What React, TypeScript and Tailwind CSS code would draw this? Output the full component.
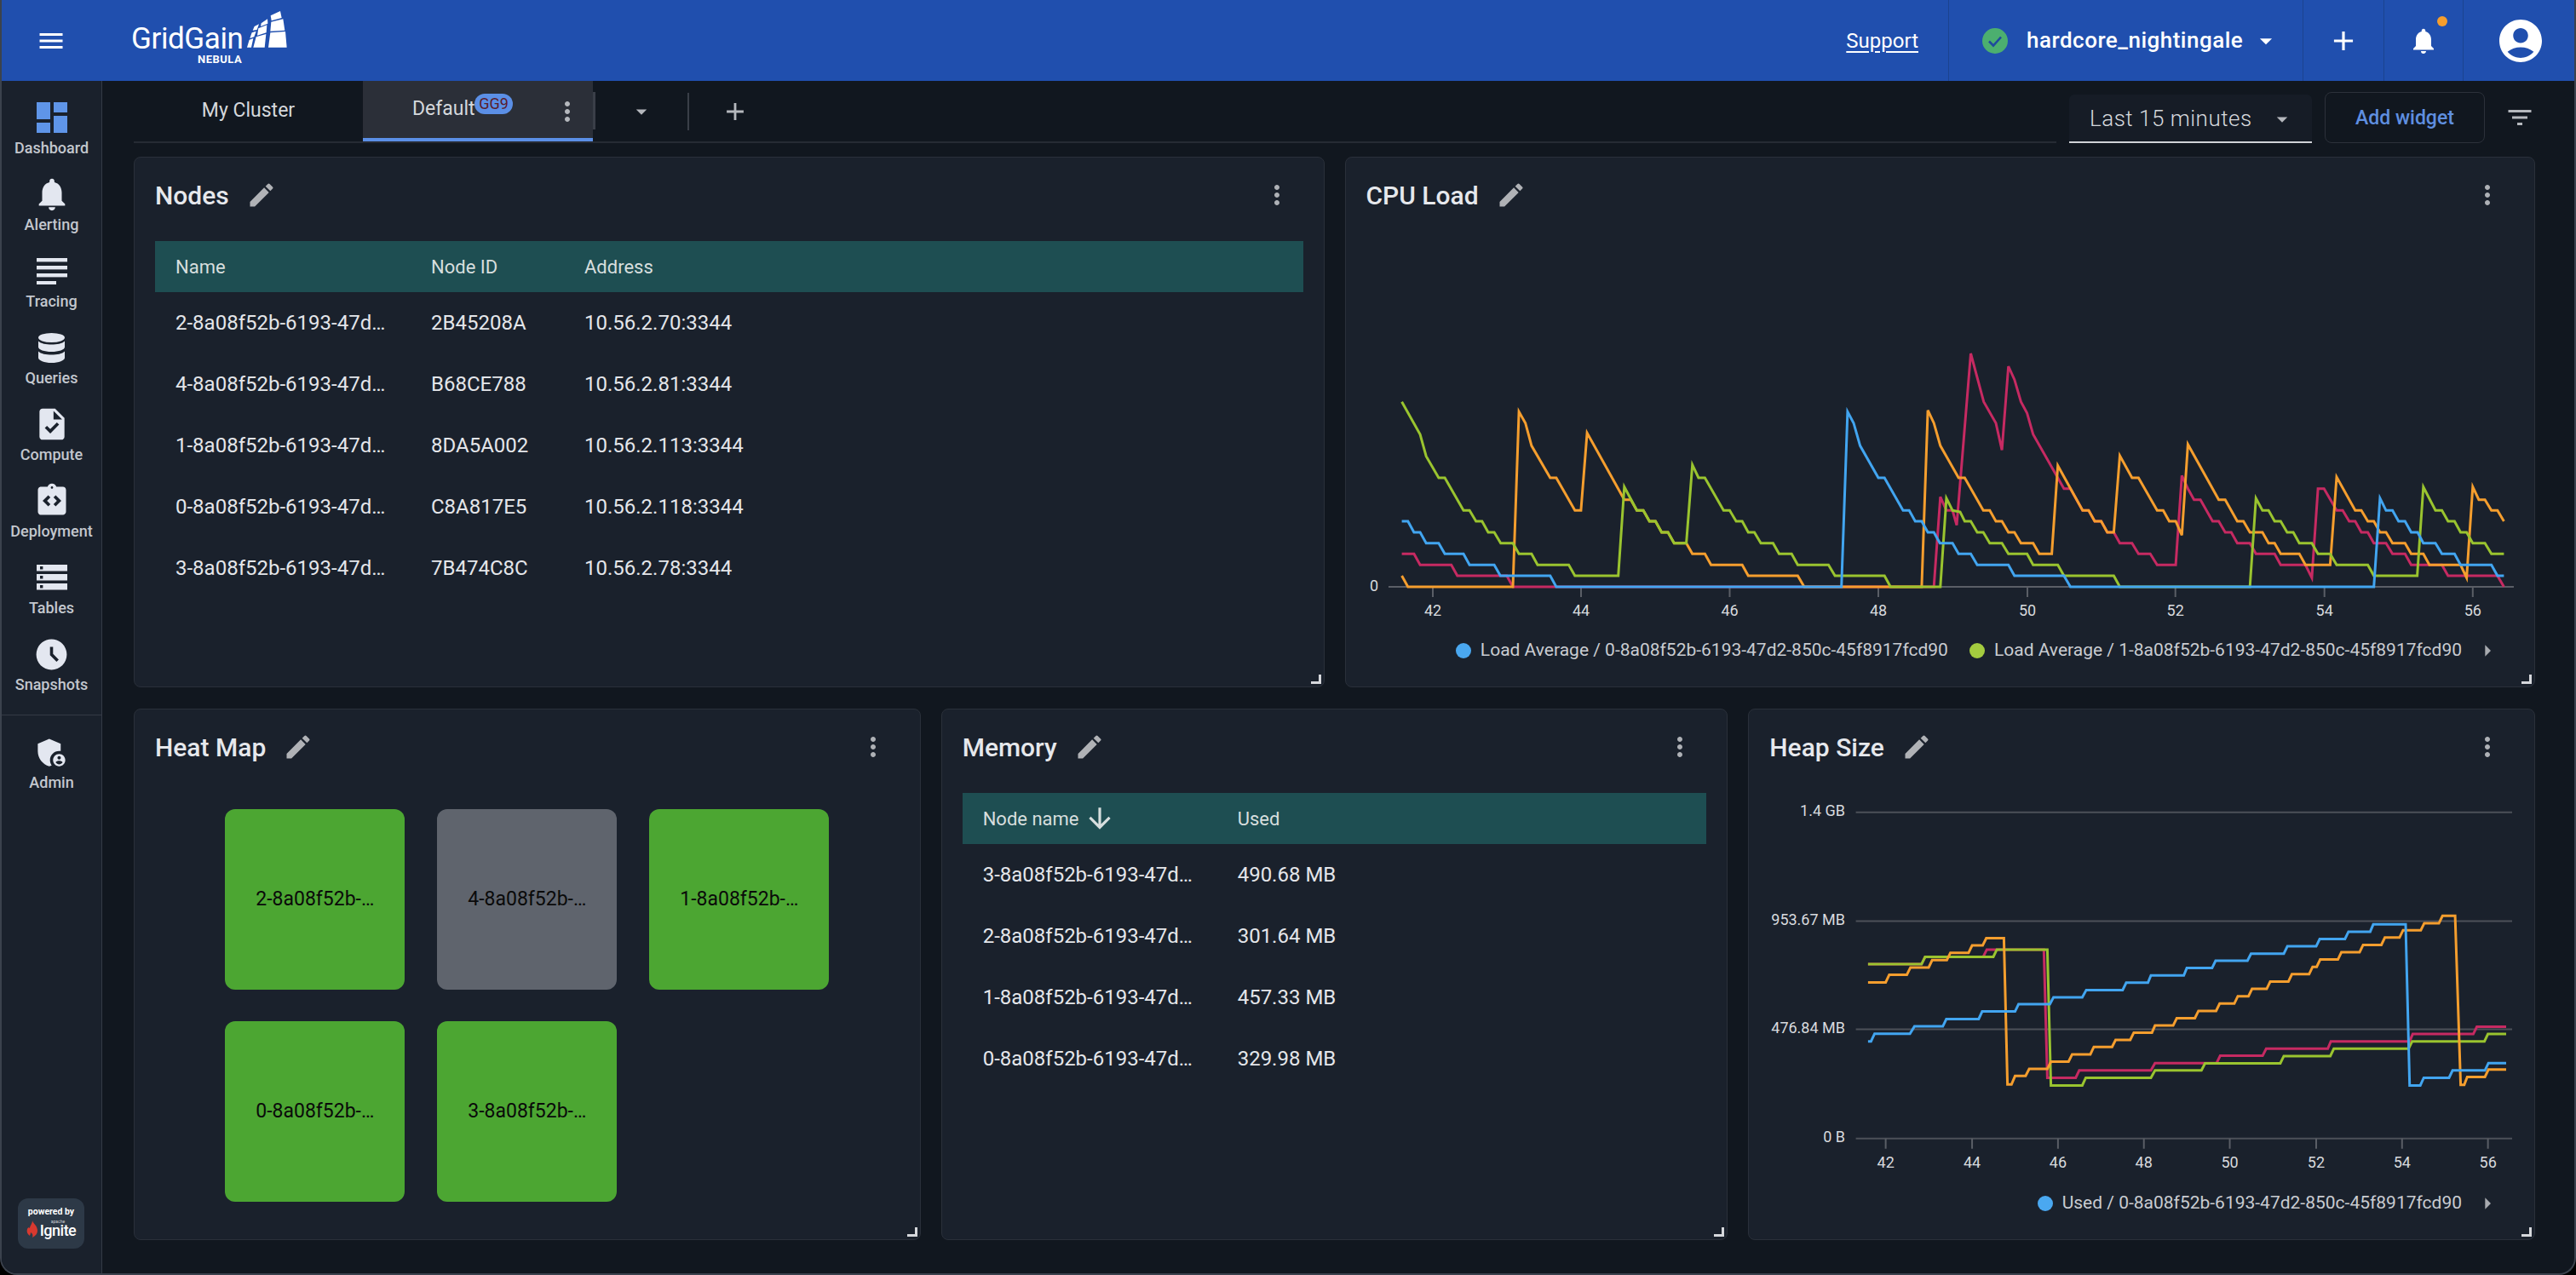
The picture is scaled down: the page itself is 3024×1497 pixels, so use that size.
import React from "react";
import {
  MdDashboard, MdNotifications, MdTask, MdIntegrationInstructions, MdAccessTimeFilled, MdAdminPanelSettings,
  MdEdit, MdMoreVert, MdMenu, MdAccountCircle, MdFilterList, MdAdd, MdArrowDropDown, MdArrowRight, MdArrowDownward,
} from "react-icons/md";

type P = number[];
const BLUE = "#42a5f0", PINK = "#c62a62", ORANGE = "#f59e2e", GREEN = "#9ac42f";

// CPU chart: traced from the picture; a is in left half units, b in right half units
const cx = (z: number) => 1600 + z / 2.24;
const cy = (z: number) => 380 + z / 3;
function cpu(a: P, b: P) {
  const out: string[] = [];
  for (let i = 0; i < a.length; i += 2) out.push(`${cx(a[i]).toFixed(1)},${cy(a[i + 1]).toFixed(1)}`);
  for (let i = 0; i < b.length; i += 2) out.push(`${cx(b[i] + 1568).toFixed(1)},${cy(b[i + 1]).toFixed(1)}`);
  return out.join(" ");
}
const hx = (z: number) => 2080 + z / 1.686;
const hy = (z: number) => 930 + z / 2.904;
function heap(a: P) {
  const out: string[] = [];
  for (let i = 0; i < a.length; i += 2) out.push(`${hx(a[i]).toFixed(1)},${hy(a[i + 1]).toFixed(1)}`);
  return out.join(" ");
}

const cpuPink = cpu(
  [100,811,132,811,148,850,230,850,246,888,376,888,392,927,1499,927,1516,610,1532,658,1548,658,1559,710],
  [28,105,62,275,94,350,110,445,127,150,143,197,160,275,176,315,192,390,273,581,290,581,322,658,338,658,354,696,371,696,387,735,404,735,420,773,452,773,469,811,500,811,518,850,567,850,583,535,599,581,615,620,632,620,664,696,680,696,697,735,713,735,729,773,762,773,778,811,827,811,843,850,908,850,925,895,941,581,957,581,990,658,1006,658,1023,696,1039,696,1055,735,1072,735,1088,773,1120,773,1137,811,1170,811,1186,850,1267,850,1283,888,1413,888,1430,927],
);
const cpuOrange = cpu(
  [100,888,116,927,392,927,408,310,425,350,441,430,490,543,506,543,555,658,571,658,587,385,685,620,702,620,718,658,735,658,751,696,767,696,783,735,800,735,816,773,848,773,864,811,897,811,913,850,995,850,1011,888,1141,888,1158,927,1467,927,1483,305,1499,350,1516,430,1564,543],
  [12,543,61,658,78,658,94,696,110,696,127,735,143,735,160,773,192,773,208,811,241,811,257,500,322,658,338,658,354,696,371,696,387,735,404,735,420,465,452,543,469,543,518,658,534,658,550,696,567,696,583,745,599,425,680,620,697,620,729,696,745,696,762,735,795,735,811,773,827,773,843,811,892,811,908,850,973,850,990,540,1039,658,1055,658,1072,696,1088,696,1104,735,1120,735,1137,773,1170,773,1186,811,1218,811,1234,850,1316,850,1332,895,1348,575,1364,620,1380,620,1397,658,1413,658,1430,696],
);
const cpuGreen = cpu(
  [100,275,148,390,164,467,197,543,213,543,262,658,278,658,295,696,311,696,327,735,343,735,360,773,392,773,408,811,441,811,457,850,539,850,555,888,669,888,685,575,718,658,735,658,751,696,767,696,783,735,800,735,816,773,848,773,864,497,880,543,897,543,946,658,962,658,979,696,995,696,1011,735,1027,735,1044,773,1076,773,1092,811,1125,811,1141,850,1222,850,1239,888,1369,888,1385,927,1516,927,1532,615,1548,658],
  [0,663,12,696,28,696,45,735,61,735,78,773,110,773,127,811,176,811,192,850,257,850,273,888,404,888,420,927,762,927,778,615,795,658,811,658,827,696,843,696,860,735,876,735,892,773,925,773,941,811,973,811,990,850,1072,850,1088,888,1202,888,1218,575,1250,658,1267,658,1283,696,1300,696,1316,735,1332,735,1348,773,1380,773,1397,811,1430,811],
);
const cpuBlue = cpu(
  [100,696,116,696,132,735,148,735,164,773,197,773,213,811,262,811,278,850,343,850,359,888,490,888,506,927,1256,927,1272,310,1288,350,1305,430,1353,543,1369,543,1418,658,1434,658,1450,696,1467,696,1483,735,1499,735,1515,773,1548,773,1564,811],
  [28,811,45,850,127,850,143,888,273,888,290,927,1088,927,1104,615,1120,658,1137,658,1153,696,1170,696,1186,735,1203,735,1218,773,1250,773,1267,811,1300,811,1316,850,1397,850,1413,888,1430,888],
);

const heapPink = heap([192,587,298,587,305,562,420,562,427,537,540,537,547,974,603,974,610,949,752,949,760,924,882,924,889,899,973,899,980,875,1102,875,1108,850,1264,850,1270,825,1390,825,1397,800,1455,800]);
const heapGreen = heap([192,587,298,587,305,562,440,562,447,537,547,537,554,1000,616,1000,623,974,752,974,760,949,852,949,859,925,1008,925,1015,900,1107,900,1114,875,1262,875,1269,850,1412,850,1419,825,1455,825]);
const heapOrange = heap([192,649,227,649,234,623,269,623,276,598,312,598,319,573,348,573,355,548,391,548,398,523,419,523,426,498,461,498,468,997,476,997,483,968,504,968,511,944,547,944,554,919,589,919,596,894,632,894,639,869,675,869,682,845,711,845,718,820,754,820,760,796,796,796,803,771,839,771,846,746,881,746,888,721,917,721,924,696,945,696,952,671,981,671,988,646,1024,646,1031,621,1065,621,1072,596,1080,596,1087,571,1122,571,1129,546,1165,546,1172,521,1208,521,1215,496,1244,496,1251,471,1286,471,1293,447,1322,447,1329,422,1354,422,1365,998,1372,998,1378,971,1413,971,1420,946,1455,946]);
const heapBlue = heap([192,850,198,850,205,824,275,824,284,799,340,799,347,774,411,774,418,748,483,748,490,723,552,723,559,700,616,700,624,675,696,675,703,650,746,650,752,625,817,625,823,600,873,600,880,575,943,575,950,551,1015,551,1022,526,1079,526,1086,501,1136,501,1143,476,1186,476,1192,451,1256,451,1264,1000,1285,1000,1292,974,1342,974,1349,949,1413,949,1420,924,1455,924]);

function Line({ points, color }: { points: string; color: string }) {
  return <polyline points={points} fill="none" stroke={color} strokeWidth={3} strokeLinejoin="miter" />;
}

function TracingIcon() {
  return (
    <svg viewBox="0 0 36 32" className="w-[36px] h-[32px]" fill="currentColor">
      <rect x="0" y="1" width="36" height="4.4" />
      <rect x="0" y="10" width="36" height="4.4" />
      <rect x="0" y="19" width="36" height="4.4" />
      <rect x="0" y="28" width="23" height="4.4" />
    </svg>
  );
}
function QueriesIcon() {
  return (
    <svg viewBox="0 0 31 35" className="w-[31px] h-[35px]" fill="currentColor">
      <ellipse cx="15.5" cy="5.5" rx="15.5" ry="5.5" />
      <path d="M0 9.5c3 3 9 4 15.5 4s12.500-1 15.500-4v7c0 3-7 5.500-15.500 5.500S0 19.500 0 16.500z" />
      <path d="M0 21.500c3 3 9 4 15.500 4s12.500-1 15.500-4V29c0 3.300-7 6-15.500 6S0 32.300 0 29z" />
    </svg>
  );
}
function TablesIcon() {
  return (
    <svg viewBox="0 0 36 30" className="w-[36px] h-[30px]" fill="currentColor">
      <path fillRule="evenodd" d="M0 0h36v7.600H0zM4 2v3.400h3.400V2z" />
      <path fillRule="evenodd" d="M0 11h36v7.600H0zM4 13v3.400h3.400V13z" />
      <path fillRule="evenodd" d="M0 22h36v7.600H0zM4 24v3.400h3.400V24z" />
    </svg>
  );
}

function NavItem({ label, children }: { label: string; children: React.ReactNode }) {
  return (
    <div className="h-[90px] w-full flex flex-col items-center">
      <div className="h-[48px] flex items-center justify-center text-[#e3e7f0]">{children}</div>
      <div className="h-[24px] leading-[24px] text-[18px] font-medium text-[#c3c7ce]">{label}</div>
    </div>
  );
}

function Sidebar() {
  return (
    <aside className="w-[118px] shrink-0 h-full bg-[#1a212c] border-r border-[#343a45] flex flex-col pt-[19px]">
      <NavItem label="Dashboard"><MdDashboard size={48} className="text-[#5f95e8]" /></NavItem>
      <NavItem label="Alerting"><MdNotifications size={46} /></NavItem>
      <NavItem label="Tracing"><TracingIcon /></NavItem>
      <NavItem label="Queries"><QueriesIcon /></NavItem>
      <NavItem label="Compute"><MdTask size={44} /></NavItem>
      <NavItem label="Deployment"><MdIntegrationInstructions size={44} /></NavItem>
      <NavItem label="Tables"><TablesIcon /></NavItem>
      <NavItem label="Snapshots"><MdAccessTimeFilled size={43} /></NavItem>
      <div className="mt-[5px] mb-[19px] border-t border-[#343a45]" />
      <NavItem label="Admin"><MdAdminPanelSettings size={43} /></NavItem>
      <div className="mt-auto mb-[29px] ml-[19px] w-[78px] h-[59px] rounded-[12px] bg-[#2d3947] flex flex-col items-center pt-[9px]">
        <div className="text-[10.500px] leading-[13px] font-bold text-white">powered by</div>
        <div className="flex items-end mt-[3px]">
          <svg viewBox="0 0 14 20" className="w-[14px] h-[20px]">
            <path fill="#d8392f" d="M7 0c1 4 6 6 6 12 0 3-2 6-6 8C8 17 7 15 5 14c0 2-1 3-1 4C1 16 0 13 1 10c1-2 2-2 3-1 0-3 3-5 3-9z" />
          </svg>
          <div className="ml-[2px] flex flex-col items-center">
            <span className="text-[5px] leading-[5px] text-[#cfd3d8]">apache</span>
            <span className="text-[18px] leading-[16px] font-medium tracking-[-0.500px] text-white">Ignite</span>
          </div>
        </div>
      </div>
    </aside>
  );
}

function Logo() {
  return (
    <div className="flex flex-col ml-[76px] pt-[5px]">
      <div className="flex items-start h-[60px]">
        <span className="w-[126px] text-[35px] leading-[35px] mt-[23px] font-normal tracking-[-0.400px] text-white whitespace-nowrap">GridGain</span>
        <svg viewBox="0 0 210 180" className="w-[70px] h-[60px]" fill="#fff">
          <polygon points="113,40 147,24 152,48 116,58" />
          <polygon points="115,62 157,52 163,92 112,95" />
          <polygon points="112,100 165,96 170,152 105,152" />
          <polygon points="80,67 102,52 103,68 78,78" />
          <polygon points="70,85 100,73 98,100 66,110" />
          <polygon points="62,115 97,105 92,152 52,152" />
          <polygon points="56,78 72,70 65,90 50,92" />
          <polygon points="47,100 62,95 55,115 40,120" />
          <polygon points="38,125 52,120 45,152 30,152" />
        </svg>
      </div>
      <div className="text-[13px] leading-[13px] font-bold tracking-[0.500px] text-white ml-[78px] -mt-[2px]">NEBULA</div>
    </div>
  );
}

function Header() {
  return (
    <header className="h-[95px] shrink-0 bg-[#204fae] flex items-stretch text-white">
      <div className="flex items-center pl-[40px]">
        <MdMenu size={36} />
      </div>
      <Logo />
      <div className="flex-1" />
      <div className="flex items-center pr-[35px]">
        <span className="text-[24px] underline underline-offset-[4px]">Support</span>
      </div>
      <div className="w-[416px] border-l border-[#1b438f] flex items-center pl-[39px]">
        <svg viewBox="0 0 30 30" className="w-[30px] h-[30px]">
          <circle cx="15" cy="15" r="15" fill="#4caf6f" />
          <path d="M8 15.500l5 5 9-10" fill="none" stroke="#1f4a9c" strokeWidth="2.600" />
        </svg>
        <span className="ml-[22px] w-[254px] text-[26px] tracking-[0.500px] font-medium whitespace-nowrap">hardcore_nightingale</span>
        <MdArrowDropDown size={34} className="ml-[10px]" />
      </div>
      <div className="w-[95px] border-l border-[#1b438f] flex items-center justify-center"><MdAdd size={38} /></div>
      <div className="w-[93px] border-l border-[#1b438f] flex items-center justify-center relative">
        <MdNotifications size={36} />
        <span className="absolute left-[62px] top-[19px] w-[12px] h-[12px] rounded-full bg-[#f59e2e]" />
      </div>
      <div className="w-[131px] border-l border-[#1b438f] flex items-center pl-[37px]"><MdAccountCircle size={60} /></div>
    </header>
  );
}

function TabBar() {
  return (
    <div className="h-[73px] shrink-0 flex items-end">
      <div className="w-[2257px] h-full border-b-2 border-[#262b34] flex items-stretch">
        <div className="w-[269px] flex items-center justify-center text-[23px] text-[#d5d8dc]">My Cluster</div>
        <div className="w-[270px] relative bg-[#2b2f38] border-b-[4px] border-[#5b8fe6] flex items-center pl-[58px] text-[23px] text-[#d5d8dc] h-[71px]">
          Default
          <span className="absolute left-[131px] top-[15px] w-[45px] h-[24px] rounded-[12px] bg-[#5b8fe6] text-[#5a1c2c] text-[18px] leading-[24px] text-center">GG9</span>
          <MdMoreVert size={36} className="absolute left-[222px] top-[18px] text-[#b5b8bd]" />
        </div>
        <div className="self-center w-[3px] h-[44px] bg-[#3a3f48] -mt-[2px]" />
        <div className="w-[108px] flex items-center justify-center"><MdArrowDropDown size={30} className="text-[#b5b8bd]" /></div>
        <div className="self-center w-[2px] h-[44px] bg-[#3a3f48]" />
        <div className="w-[108px] flex items-center justify-center"><MdAdd size={34} className="text-[#b5b8bd]" /></div>
      </div>
      <div className="ml-[15px] w-[285px] h-[57px] bg-[#161c26] border-b-2 border-[#d0d2d6] flex items-center pl-[24px] pt-[2px] rounded-t-[6px] text-[#d5d8dc]">
        <span className="w-[193px] text-[26px] tracking-[0.500px] font-light whitespace-nowrap">Last 15 minutes</span>
        <MdArrowDropDown size={30} className="ml-[18px] text-[#b5b8bd]" />
      </div>
      <div className="ml-[15px] w-[188px] h-[60px] border border-[#2c313a] rounded-[8px] flex items-center justify-center pt-[2px] text-[23px] font-medium text-[#5f8fe0]">Add widget</div>
      <div className="ml-[23px] h-[60px] flex items-center"><MdFilterList size={36} className="text-[#b5b8bd]" /></div>
    </div>
  );
}

function Panel({ title, children }: { title: string; children: React.ReactNode }) {
  return (
    <section className="relative min-w-0 h-full bg-[#1a212c] border border-[#2a303a] rounded-[8px] flex flex-col">
      <div className="h-[88px] shrink-0 flex items-center pl-[24px] pr-[37px]">
        <span className="text-[30px] font-medium text-[#e6e8ec]">{title}</span>
        <MdEdit size={36} className="ml-[20px] text-[#b0b2b6]" />
        <MdMoreVert size={36} className="ml-auto text-[#aeb1b6]" />
      </div>
      {children}
      <svg viewBox="0 0 12 11" className="absolute right-[3px] bottom-[3px] w-[12px] h-[11px]" fill="none" stroke="#d6d8dc" strokeWidth="3">
        <path d="M0 9.500h10.500V0" />
      </svg>
    </section>
  );
}

function DataTable({ cols, rows }: { cols: { label: React.ReactNode; w: string }[]; rows: string[][] }) {
  return (
    <div className="mx-[24px] mt-[10px]">
      <div className="h-[60px] bg-[#1e4e52] flex items-center text-[22px] text-[#d7dede]">
        {cols.map((c, i) => <div key={i} className={`${c.w} pl-[24px] flex items-center`}>{c.label}</div>)}
      </div>
      {rows.map((r, i) => (
        <div key={i} className="h-[72px] flex items-center text-[24px] text-[#e4e6ea]">
          {r.map((t, j) => <div key={j} className={`${cols[j].w} pl-[24px] whitespace-nowrap`}>{t}</div>)}
        </div>
      ))}
    </div>
  );
}

function Legend({ items }: { items: { color: string; text: string }[] }) {
  return (
    <div className="h-[42px] shrink-0 flex items-center justify-end pr-[39px] text-[21px] text-[#c9ccd1]">
      {items.map((it, i) => (
        <div key={i} className="flex items-center ml-[25px]">
          <span className="w-[18px] h-[18px] rounded-full mr-[11px]" style={{ background: it.color }} />
          {it.text}
        </div>
      ))}
      <MdArrowRight size={32} className="ml-[14px] text-[#a8abb0]" />
    </div>
  );
}

function CpuChart() {
  const ticks = [[42, 1681], [44, 1855], [46, 2029.5], [48, 2204], [50, 2379], [52, 2552.7], [54, 2727.7], [56, 2901.8]];
  return (
    <svg viewBox="1579 273 1396 470" className="w-[1396px] h-[470px] shrink-0 block">
      <line x1="1629" x2="2950" y1="689" y2="689" stroke="#5a5e66" strokeWidth="2" />
      {ticks.map(([l, x]) => (
        <g key={l}>
          <line x1={x} x2={x} y1="689" y2="701" stroke="#5a5e66" strokeWidth="2" />
          <text x={x} y="722.500" textAnchor="middle" fontSize="18" fill="#d8dade">{l}</text>
        </g>
      ))}
      <text x="1617" y="693.500" textAnchor="end" fontSize="18" fill="#d8dade">0</text>
      <Line points={cpuPink} color={PINK} />
      <Line points={cpuOrange} color={ORANGE} />
      <Line points={cpuGreen} color={GREEN} />
      <Line points={cpuBlue} color={BLUE} />
    </svg>
  );
}

function HeapChart() {
  const xs = [[42, 227], [44, 398], [46, 568], [48, 738], [50, 908], [52, 1079], [54, 1249], [56, 1419]];
  const ys = [["1.4 GB", 69], ["953.67 MB", 440], ["476.84 MB", 809], ["0 B", 1181]] as const;
  return (
    <svg viewBox="2054 921 922 471" className="w-[922px] h-[471px] shrink-0 block">
      {ys.map(([l, z]) => (
        <g key={l}>
          <line x1="2179.600" x2="2950" y1={hy(z)} y2={hy(z)} stroke="#4c5058" strokeWidth="2" />
          <text x="2167" y={hy(z) + 4} textAnchor="end" fontSize="18" fill="#d8dade">{l}</text>
        </g>
      ))}
      {xs.map(([l, z]) => (
        <g key={l}>
          <line x1={hx(z)} x2={hx(z)} y1={hy(1181)} y2={hy(1216)} stroke="#5a5e66" strokeWidth="2" />
          <text x={hx(z)} y="1370.500" textAnchor="middle" fontSize="18" fill="#d8dade">{l}</text>
        </g>
      ))}
      <Line points={heapPink} color={PINK} />
      <Line points={heapGreen} color={GREEN} />
      <Line points={heapOrange} color={ORANGE} />
      <Line points={heapBlue} color={BLUE} />
    </svg>
  );
}

function HeatMap() {
  const nodes = [
    ["2-8a08f52b-…", true], ["4-8a08f52b-…", false], ["1-8a08f52b-…", true], ["0-8a08f52b-…", true], ["3-8a08f52b-…", true],
  ] as const;
  return (
    <div className="mt-[29px] grid grid-cols-[repeat(3,211px)] auto-rows-[212px] gap-x-[38px] gap-y-[37px] justify-center">
      {nodes.map(([n, up]) => (
        <div key={n} className={`rounded-[12px] flex items-center justify-center text-[23px] text-[#0a0a0a] ${up ? "bg-[#4ca632]" : "bg-[#5f646d]"}`}>{n}</div>
      ))}
    </div>
  );
}

export default function App() {
  return (
    <div className="w-[3024px] h-[1497px] bg-black font-[family-name:Roboto,sans-serif] overflow-hidden">
      <div className="w-full h-full flex flex-col rounded-b-[20px] overflow-hidden border-x-2 border-b-2 border-[#3b424d] box-border bg-[#11171f]">
        <Header />
        <div className="flex-1 min-h-0 flex">
          <Sidebar />
          <main className="flex-1 min-w-0 flex flex-col pl-[37px] pr-[46px]">
            <TabBar />
            <div className="mt-[16px] h-[623px] grid grid-cols-2 gap-x-[24px]">
              <Panel title="Nodes">
                <DataTable
                  cols={[{ label: "Name", w: "w-[300px]" }, { label: "Node ID", w: "w-[180px]" }, { label: "Address", w: "w-[300px]" }]}
                  rows={[
                    ["2-8a08f52b-6193-47d…", "2B45208A", "10.56.2.70:3344"],
                    ["4-8a08f52b-6193-47d…", "B68CE788", "10.56.2.81:3344"],
                    ["1-8a08f52b-6193-47d…", "8DA5A002", "10.56.2.113:3344"],
                    ["0-8a08f52b-6193-47d…", "C8A817E5", "10.56.2.118:3344"],
                    ["3-8a08f52b-6193-47d…", "7B474C8C", "10.56.2.78:3344"],
                  ]}
                />
              </Panel>
              <Panel title="CPU Load">
                <CpuChart />
                <Legend items={[
                  { color: "#4aa8f0", text: "Load Average / 0-8a08f52b-6193-47d2-850c-45f8917fcd90" },
                  { color: "#a4cc3f", text: "Load Average / 1-8a08f52b-6193-47d2-850c-45f8917fcd90" },
                ]} />
              </Panel>
            </div>
            <div className="mt-[25px] h-[624px] grid grid-cols-3 gap-x-[24px]">
              <Panel title="Heat Map"><HeatMap /></Panel>
              <Panel title="Memory">
                <DataTable
                  cols={[
                    { label: <>Node name<MdArrowDownward size={38} className="ml-[5px]" /></>, w: "w-[299px]" },
                    { label: "Used", w: "w-[300px]" },
                  ]}
                  rows={[
                    ["3-8a08f52b-6193-47d…", "490.68 MB"],
                    ["2-8a08f52b-6193-47d…", "301.64 MB"],
                    ["1-8a08f52b-6193-47d…", "457.33 MB"],
                    ["0-8a08f52b-6193-47d…", "329.98 MB"],
                  ]}
                />
              </Panel>
              <Panel title="Heap Size">
                <HeapChart />
                <Legend items={[{ color: "#4aa8f0", text: "Used / 0-8a08f52b-6193-47d2-850c-45f8917fcd90" }]} />
              </Panel>
            </div>
          </main>
        </div>
      </div>
    </div>
  );
}
